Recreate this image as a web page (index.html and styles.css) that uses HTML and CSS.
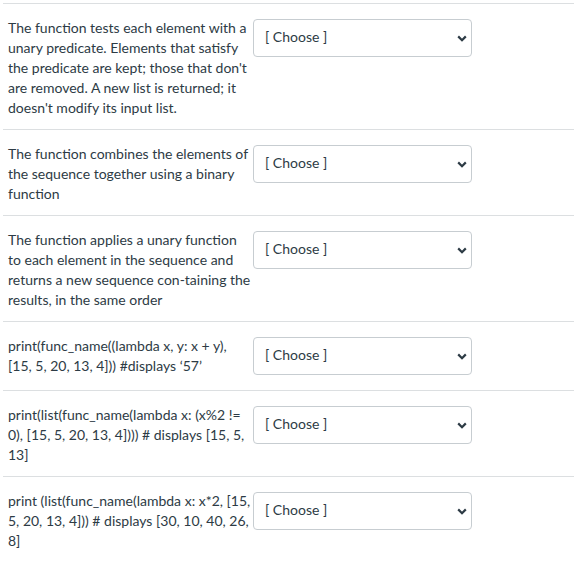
FILE: index.html
```html
<!DOCTYPE html>
<html>
<head>
<meta charset="utf-8">
<link rel="stylesheet" href="styles.css">
</head>
<body>
<div class="matching">
  <div class="row">
    <div class="label">The function tests each element with a unary predicate. Elements that satisfy the predicate are kept; those that don't are removed. A new list is returned; it doesn't modify its input list.</div>
    <div class="select"><span>[ Choose ]</span><svg class="chev" width="10" height="7" viewBox="0 0 10 7"><path d="M1.2 1.4 L5 5.2 L8.8 1.4" fill="none" stroke="#2d3b45" stroke-width="2.2"/></svg></div>
  </div>
  <div class="row">
    <div class="label">The function combines the elements of the sequence together using a binary function</div>
    <div class="select"><span>[ Choose ]</span><svg class="chev" width="10" height="7" viewBox="0 0 10 7"><path d="M1.2 1.4 L5 5.2 L8.8 1.4" fill="none" stroke="#2d3b45" stroke-width="2.2"/></svg></div>
  </div>
  <div class="row">
    <div class="label">The function applies a unary function to each element in the sequence and returns a new sequence con-taining the results, in the same order</div>
    <div class="select"><span>[ Choose ]</span><svg class="chev" width="10" height="7" viewBox="0 0 10 7"><path d="M1.2 1.4 L5 5.2 L8.8 1.4" fill="none" stroke="#2d3b45" stroke-width="2.2"/></svg></div>
  </div>
  <div class="row">
    <div class="label">print(func_name((lambda x, y: x + y), [15, 5, 20, 13, 4])) #displays ‘57’</div>
    <div class="select"><span>[ Choose ]</span><svg class="chev" width="10" height="7" viewBox="0 0 10 7"><path d="M1.2 1.4 L5 5.2 L8.8 1.4" fill="none" stroke="#2d3b45" stroke-width="2.2"/></svg></div>
  </div>
  <div class="row">
    <div class="label">print(list(func_name(lambda x: (x%2 != 0), [15, 5, 20, 13, 4]))) # displays [15, 5, 13]</div>
    <div class="select"><span>[ Choose ]</span><svg class="chev" width="10" height="7" viewBox="0 0 10 7"><path d="M1.2 1.4 L5 5.2 L8.8 1.4" fill="none" stroke="#2d3b45" stroke-width="2.2"/></svg></div>
  </div>
  <div class="row">
    <div class="label">print (list(func_name(lambda x: x*2, [15, 5, 20, 13, 4])) # displays [30, 10, 40, 26, 8]</div>
    <div class="select"><span>[ Choose ]</span><svg class="chev" width="10" height="7" viewBox="0 0 10 7"><path d="M1.2 1.4 L5 5.2 L8.8 1.4" fill="none" stroke="#2d3b45" stroke-width="2.2"/></svg></div>
  </div>
</div>
</body>
</html>
```
FILE: styles.css
```css
html, body {
  margin: 0;
  padding: 0;
  background: #ffffff;
}
body {
  font-family: Lato, "Open Sans", sans-serif;
  font-size: 14px;
  line-height: 20px;
  color: #2d3b45;
}
.matching {
  margin: 3px 0 0 3px;
}
.row {
  display: flex;
  align-items: flex-start;
  gap: 1px;
  padding: 14px 0 11px 5px;
  border-top: 1px solid #dcdfe1;
}
.label {
  width: 244px;
  flex: none;
}
.select {
  flex: none;
  box-sizing: border-box;
  width: 219px;
  height: 38px;
  margin: 1px 0 4px;
  border: 1px solid #c7cdd1;
  border-radius: 4px;
  display: flex;
  align-items: center;
  justify-content: space-between;
  padding: 0 4px 0 11px;
}
.select span {
  position: relative;
  top: -1px;
}
.chev {
  display: block;
}
```
